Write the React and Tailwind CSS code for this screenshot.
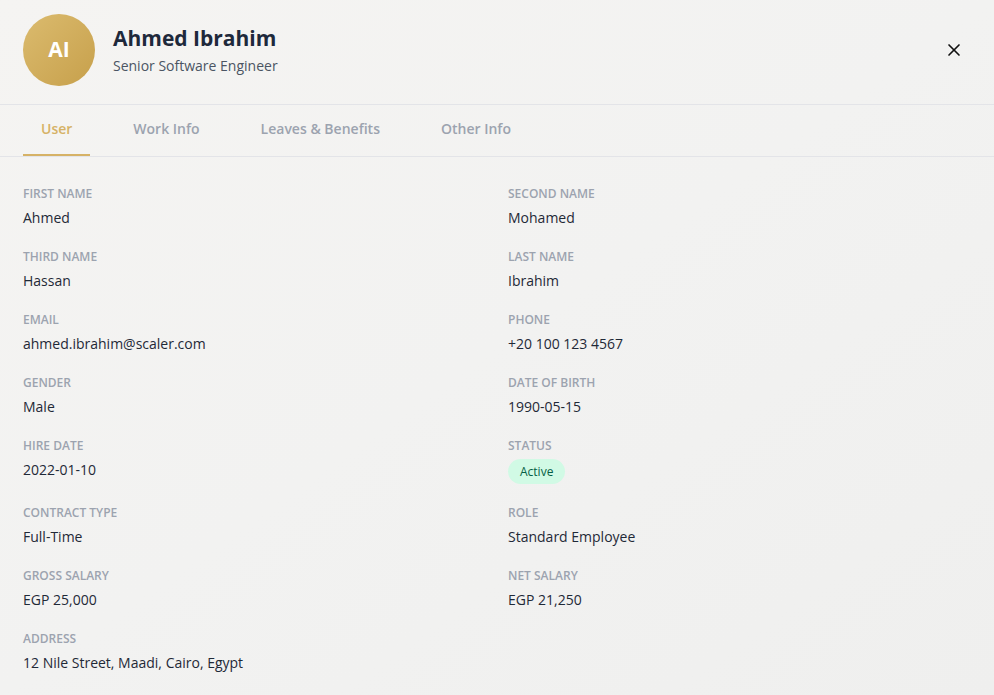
import { X } from 'lucide-react'

// Employee profile drawer: header, tab strip and a two-column field grid.
const fields = [
  ['First Name', 'Ahmed'],
  ['Second Name', 'Mohamed'],
  ['Third Name', 'Hassan'],
  ['Last Name', 'Ibrahim'],
  ['Email', 'ahmed.ibrahim@scaler.com'],
  ['Phone', '+20 100 123 4567'],
  ['Gender', 'Male'],
  ['Date of Birth', '1990-05-15'],
  ['Hire Date', '2022-01-10'],
  ['Status', null],
  ['Contract Type', 'Full-Time'],
  ['Role', 'Standard Employee'],
  ['Gross Salary', 'EGP 25,000'],
  ['Net Salary', 'EGP 21,250'],
  ['Address', '12 Nile Street, Maadi, Cairo, Egypt'],
]

const tabs = ['User', 'Work Info', 'Leaves & Benefits', 'Other Info']

export default function App() {
  return (
    <div
      className="min-h-[695px] w-full bg-gradient-to-br from-[#f5f4f2] via-[#f2f2f1] to-[#efefee] text-[#1f2937]"
      style={{ fontFamily: '"Open Sans", "Noto Sans", sans-serif' }}
    >
      <div className="flex items-center justify-between border-b border-[#e3e4e8] pl-[23px] pr-[30px] pt-[14px] pb-[18px]">
        <div className="flex items-center gap-[18px]">
          <div className="flex h-[72px] w-[72px] items-center justify-center rounded-full bg-gradient-to-br from-[#dbbb6e] to-[#c7a04b] text-[21px] font-bold text-white">
            AI
          </div>
          <div className="flex flex-col">
            <h2 className="text-[21px] font-bold leading-[28px] text-[#1e293b]">Ahmed Ibrahim</h2>
            <p className="mt-1 text-[14px] leading-5 text-[#4b5563]">Senior Software Engineer</p>
          </div>
        </div>
        <button type="button" className="text-[#111]">
          <X size={20} strokeWidth={2} />
        </button>
      </div>

      <div className="flex gap-[25px] border-b border-[#e3e4e8] px-[23px]">
        {tabs.map((t, i) => (
          <div
            key={t}
            className={`flex h-[51px] items-center border-b-2 px-[18px] pb-[2px] text-[14px] font-semibold ${
              i === 0 ? 'border-[#d6b266] text-[#d6b266]' : 'border-transparent text-[#9ca3af]'
            }`}
          >
            {t}
          </div>
        ))}
      </div>

      <div className="grid grid-cols-2 gap-x-[22px] gap-y-[21px] px-[23px] pt-[29px] pb-6">
        {fields.map(([label, value]) => (
          <div key={label} className="flex flex-col">
            <span className="text-[12px] font-semibold uppercase leading-4 text-[#9ca3af]">{label}</span>
            {value ? (
              <span className="mt-[5px] text-[14px] leading-[21px] text-[#1f2937]">{value}</span>
            ) : (
              <span className="mt-[5px] inline-flex h-[25px] w-fit items-center rounded-full bg-[#d1fae5] px-[12px] text-[12px] font-medium text-[#065f46]">
                Active
              </span>
            )}
          </div>
        ))}
      </div>
    </div>
  )
}
